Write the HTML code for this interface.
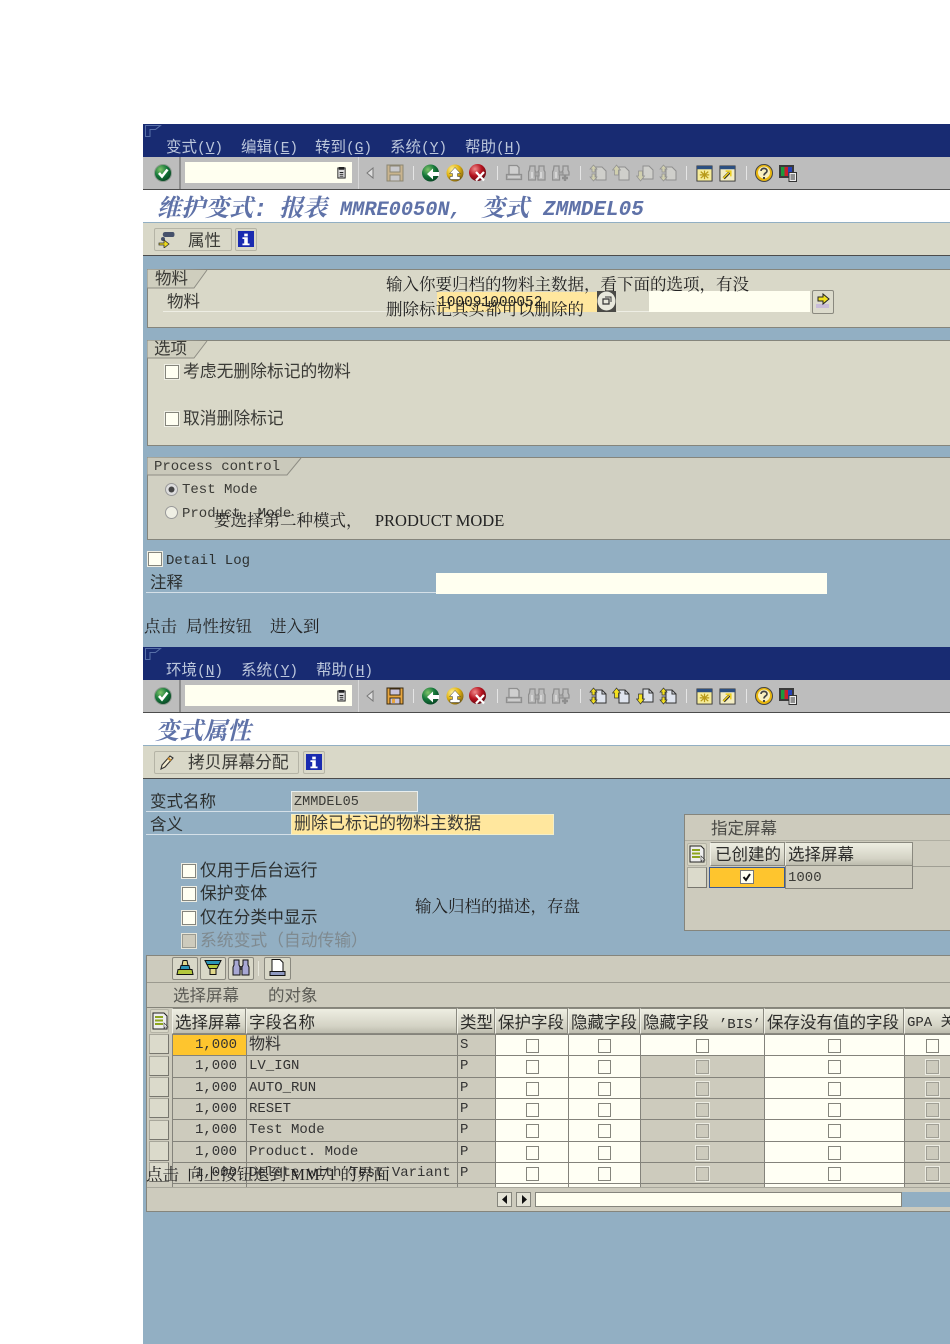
<!DOCTYPE html>
<html lang="zh"><head><meta charset="utf-8"><title>SAP</title>
<style>
html,body{margin:0;padding:0;background:#fff}
#p{position:relative;width:950px;height:1344px;overflow:hidden;background:#fff;font-family:"Liberation Mono","Noto Sans CJK SC",monospace;color:#333}
#p div,#p span.a,#p svg.a{position:absolute}
.t{position:absolute;white-space:nowrap;font-size:14px;line-height:18px;color:#3a3a36;transform:translateY(-8px)}
.z{font-family:"Liberation Mono","Noto Sans CJK SC",monospace;font-size:16.5px;transform:translateY(-7px)}
.s{font-family:"Liberation Serif","Noto Serif CJK SC",serif;font-size:16.5px;color:#222;line-height:20px;transform:translateY(-9px)}
.m{font-family:"Liberation Mono","Noto Sans CJK SC",monospace;font-size:15.5px;color:#bcc7dc;line-height:18px;transform:translateY(-8px)}
.m span{font-size:14.5px}
.ti{font-style:italic;font-weight:bold;color:#5f72a8;font-size:24px;line-height:30px;transform:translateY(-11px);font-family:"Liberation Mono","Noto Serif CJK SC",serif}
.cb{box-sizing:border-box;width:14px;height:14px;background:#fffff2;border:1px solid #85857c;box-shadow:0 0 0 1px #eeeee4}
.cb.d{background:#cdcbbd;border:1px solid #9a9a90;box-shadow:0 0 0 1px #e6e6da}
.hd{box-sizing:border-box;background:linear-gradient(#eeeee2,#d4d3c5 70%,#bdbcae);border:1px solid #8a897f;border-left-color:#f0f0e6;font-size:16.5px;color:#2c2c2a;line-height:29px;padding-left:2px;white-space:nowrap;overflow:hidden;height:26px;top:1008px}
.sel{box-sizing:border-box;left:149px;width:20px;height:20px;background:#dbdacb;border:1px solid #a7a69a;border-right-color:#77766e;border-bottom-color:#77766e}
.btn{box-sizing:border-box;background:#d9d8c8;border:1px solid #b5b4a6;border-radius:2px}
.hl{height:1px;background:#7f7e76}
.ul{height:1px;background:#d5e0e8}
table{border-collapse:collapse;table-layout:fixed;position:absolute;left:172px;top:1034px;width:790px}
td{height:20.33px;padding:0;border:1px solid #84837b;background:#cdcbbd;font-size:14px;line-height:20px;color:#333;white-space:nowrap;position:relative;overflow:hidden;vertical-align:top}
td.w{background:#fffff4}
td.n{text-align:right;padding-right:9px}
td.x{padding-left:2px}
td i{display:block;box-sizing:border-box;width:13px;height:14px;margin:4px auto 0;background:#fffff4;border:1px solid #85857c}
td.k i{background:#cdcbbd;border-color:#a09f95;box-shadow:0 0 0 1px #ecece2}
</style></head><body><div id="p">
<svg width="0" height="0" style="position:absolute"><defs>
<radialGradient id="gg" cx=".35" cy=".3" r=".8"><stop offset="0" stop-color="#7fc46a"/><stop offset=".5" stop-color="#14773a"/><stop offset="1" stop-color="#063c20"/></radialGradient>
<radialGradient id="gy" cx=".35" cy=".3" r=".8"><stop offset="0" stop-color="#fff3a0"/><stop offset=".5" stop-color="#e2b410"/><stop offset="1" stop-color="#6e5410"/></radialGradient>
<radialGradient id="gr" cx=".35" cy=".3" r=".8"><stop offset="0" stop-color="#f08a8a"/><stop offset=".5" stop-color="#b5121e"/><stop offset="1" stop-color="#560810"/></radialGradient>
<symbol id="ok" viewBox="0 0 18 18"><circle cx="9" cy="9" r="8.500" fill="url(#gg)" stroke="#8e9a90"/><path d="M5 9l3 3.500 5.500-7" fill="none" stroke="#fff" stroke-width="2.600"/></symbol>
<symbol id="back" viewBox="0 0 18 18"><circle cx="8.500" cy="9" r="8.500" fill="url(#gg)"/><path d="M5 10l6-5.500v3.500h6v4h-6v3.500z" fill="#fff"/></symbol>
<symbol id="up" viewBox="0 0 18 18"><circle cx="9" cy="9" r="8.500" fill="url(#gy)"/><path d="M9 3.500l5.500 6H11.500v3H14v3H4v-3h2.500v-3H3.500z" fill="#fff" stroke="#333" stroke-width=".5"/></symbol>
<symbol id="x" viewBox="0 0 18 18"><circle cx="8.500" cy="8.500" r="8.500" fill="url(#gr)"/><path d="M7 8l8 8.500M15 8l-8 8.500" stroke="#fff" stroke-width="2.300"/></symbol>
<symbol id="save" viewBox="0 0 18 18"><path d="M1 1h16v16H1z" fill="#e8a63e" stroke="#3b2b10"/><path d="M4 2h10v6H4zM4 11h10v6H4z" fill="#c9c3dc" stroke="#3b2b10"/><path d="M6 12h3v4H6z" fill="#e8a63e"/></symbol>
<symbol id="saved" viewBox="0 0 18 18"><path d="M1 1h16v16H1z" fill="#c9b48e" stroke="#8c8674"/><path d="M4 2h10v6H4zM4 11h10v6H4z" fill="#c8c8cc" stroke="#8c8674"/></symbol>
<symbol id="print" viewBox="0 0 18 18"><path d="M4 1.500h8l2 2v7H4z" fill="#cfcfcf" stroke="#8f8f8f" stroke-width="1.300"/><path d="M1.500 10.500h15v5h-15z" fill="#b4b4b4" stroke="#8f8f8f" stroke-width="1.300"/><path d="M3 13h12" stroke="#e4e4e4"/></symbol>
<symbol id="find" viewBox="0 0 18 18"><path d="M2 2h5v4l.5 2v8h-7V8L1.500 6zM11 2h5v4l1 2v8h-7V8l1-2z" fill="#bdbdbd" stroke="#8f8f8f" stroke-width="1.300"/><path d="M7 8h4v4H7z" fill="#a8a8a8" stroke="#8f8f8f"/><path d="M3 8h2v6H3zM12 8h2v6h-2z" fill="#d6d6d6"/></symbol>
<symbol id="findn" viewBox="0 0 18 18"><path d="M2 2h5v4l.5 2v8h-7V8L1.500 6zM11 2h5v4l1 2v3h-7V8l1-2z" fill="#bdbdbd" stroke="#8f8f8f" stroke-width="1.300"/><path d="M7 8h4v3H7z" fill="#a8a8a8" stroke="#8f8f8f"/><path d="M3 8h2v6H3z" fill="#d6d6d6"/><path d="M13 11v6M10 14h6" stroke="#8f8f8f" stroke-width="2.400"/></symbol>
<symbol id="p1" viewBox="0 0 18 18"><path d="M7 3h6l4 4v9H7z" fill="#dfe4ee" stroke="#333"/><path d="M13 3v4h4" fill="none" stroke="#333"/><path d="M4.500 1L8 5H6v3H3V5H1z" fill="#f4e11e" stroke="#333" stroke-width=".7"/><path d="M4.500 17L8 13H6v-3H3v3H1z" fill="#f4e11e" stroke="#333" stroke-width=".7"/></symbol>
<symbol id="p2" viewBox="0 0 18 18"><path d="M7 3h6l4 4v9H7z" fill="#dfe4ee" stroke="#333"/><path d="M13 3v4h4" fill="none" stroke="#333"/><path d="M4.500 1L8.500 6H6.500v5h-4V6H.500z" fill="#f4e11e" stroke="#333" stroke-width=".7"/></symbol>
<symbol id="p3" viewBox="0 0 18 18"><path d="M7 2h6l4 4v9H7z" fill="#dfe4ee" stroke="#333"/><path d="M13 2v4h4" fill="none" stroke="#333"/><path d="M4.500 17L8.500 12H6.500V7h-4v5H.500z" fill="#f4e11e" stroke="#333" stroke-width=".7"/></symbol>
<symbol id="d1" viewBox="0 0 18 18"><path d="M7 3h6l4 4v9H7z" fill="#cfcfcb" stroke="#8f8f8f"/><path d="M4.500 1L8 5H6v3H3V5H1z" fill="#d0cfae" stroke="#8f8f8f" stroke-width=".7"/><path d="M4.500 17L8 13H6v-3H3v3H1z" fill="#d0cfae" stroke="#8f8f8f" stroke-width=".7"/></symbol>
<symbol id="d2" viewBox="0 0 18 18"><path d="M7 3h6l4 4v9H7z" fill="#cfcfcb" stroke="#8f8f8f"/><path d="M4.500 1L8.500 6H6.500v5h-4V6H.500z" fill="#d0cfae" stroke="#8f8f8f" stroke-width=".7"/></symbol>
<symbol id="d3" viewBox="0 0 18 18"><path d="M7 2h6l4 4v9H7z" fill="#cfcfcb" stroke="#8f8f8f"/><path d="M4.500 17L8.500 12H6.500V7h-4v5H.500z" fill="#d0cfae" stroke="#8f8f8f" stroke-width=".7"/></symbol>
<symbol id="nw" viewBox="0 0 18 18"><path d="M1 1h16v16H1z" fill="#f6ec9a" stroke="#333"/><path d="M1 1h16v3.500H1z" fill="#2c4f80"/><path d="M9 6v9M5 7l8 7M13 7l-8 7M4 10.500h10" stroke="#b89a1a" stroke-width="1.300"/></symbol>
<symbol id="sc" viewBox="0 0 18 18"><path d="M1 1h16v16H1z" fill="#f3edc4" stroke="#333"/><path d="M1 1h16v3.500H1z" fill="#2c4f80"/><path d="M5 14l6-6" stroke="#222" stroke-width="3"/><path d="M4.500 14l6-6M7 6.500h5.500V12" fill="none" stroke="#eccd1a" stroke-width="1.600"/></symbol>
<symbol id="help" viewBox="0 0 18 18"><circle cx="9" cy="9" r="8.500" fill="#e8b60e" stroke="#444"/><circle cx="9" cy="8.500" r="6" fill="#f8efc0"/><path d="M6 7c0-3.500 6-3.500 6 0 0 2-3 2-3 4.500" fill="none" stroke="#444" stroke-width="1.700"/><path d="M8 13h2v2H8z" fill="#444"/></symbol>
<symbol id="cust" viewBox="0 0 18 18"><path d="M0 1h15v13H0z" fill="#3a3a3a"/><path d="M2 3h3.500v9H2z" fill="#1c9a3c"/><path d="M5.500 3H9v9H5.500z" fill="#c81e2c"/><path d="M9 3h4v9H9z" fill="#2440b8"/><path d="M10 8.500h7.500v9H10z" fill="#eee" stroke="#333"/><path d="M11.500 11h4.500M11.500 13h4.500M11.500 15h4.500" stroke="#333"/></symbol>
<symbol id="doc" viewBox="0 0 12 14"><path d="M2 2h8v11H2z" fill="#ddd" stroke="#222"/><path d="M3 1h6v3H3z" fill="#222"/><path d="M4 7h4M4 9h4M4 11h4" stroke="#222"/></symbol>
<symbol id="info" viewBox="0 0 18 18"><path d="M0 0h18v18H0z" fill="#1a2bb0"/><path d="M7 3h4v3H7zM5 7h6v7h2v2H5v-2h2V9H5z" fill="#fff"/></symbol>
<symbol id="ls" viewBox="0 0 18 18"><path d="M2 1h11l3 3v13H2z" fill="#eee" stroke="#222"/><path d="M4 4h8v2H4zM4 7.500h8v2H4zM4 11h8v2H4z" fill="#8da51f"/><path d="M13 11l4 4h-3l-1 2z" fill="#fff" stroke="#333" stroke-width=".6"/></symbol>
</defs></svg>

<div style="left:143px;top:124px;width:807px;height:1220px;background:#92afc3"></div>

<!-- Screen 1 header -->
<div style="left:143px;top:124px;width:807px;height:33px;background:#182b72"></div>
<svg class="a" style="left:145px;top:125px" width="17" height="13" fill="none" stroke="#5870a8"><path d="M.5.500h15l-5 4H5v7H.5z"/></svg>
<div class="t m" style="left:166px;top:147px">变式<span>(<u>V</u>)</span></div>
<div class="t m" style="left:241px;top:147px">编辑<span>(<u>E</u>)</span></div>
<div class="t m" style="left:315px;top:147px">转到<span>(<u>G</u>)</span></div>
<div class="t m" style="left:390px;top:147px">系统<span>(<u>Y</u>)</span></div>
<div class="t m" style="left:465px;top:147px">帮助<span>(<u>H</u>)</span></div>

<div style="left:143px;top:157px;width:807px;height:32px;background:#bdbdbd"></div>
<div style="left:143px;top:189px;width:807px;height:1px;background:#4c4c4c"></div>
<div style="left:179px;top:157px;width:2px;height:32px;background:#8d8d8d"></div>
<div style="left:358px;top:157px;width:1px;height:32px;background:#d8d8d8"></div>
<div style="left:185px;top:162px;width:167px;height:21px;background:#fffff0"></div>
<svg class="a" style="left:336px;top:166px" width="11" height="13"><use href="#doc"/></svg>
<svg class="a" style="left:154px;top:164px" width="18" height="18"><use href="#ok"/></svg>
<svg class="a" style="left:366px;top:167px" width="9" height="12"><path d="M7 1L1 6l6 5z" fill="#ddd" stroke="#777"/></svg>
<svg class="a" style="left:386px;top:164px" width="18" height="18"><use href="#saved"/></svg>
<div style="left:413px;top:166px;width:1px;height:14px;background:#e5e5e5"></div>
<svg class="a" style="left:422px;top:164px" width="18" height="18"><use href="#back"/></svg>
<svg class="a" style="left:446px;top:164px" width="18" height="18"><use href="#up"/></svg>
<svg class="a" style="left:469px;top:164px" width="18" height="18"><use href="#x"/></svg>
<div style="left:497px;top:166px;width:1px;height:14px;background:#e5e5e5"></div>
<svg class="a" style="left:505px;top:164px" width="18" height="18"><use href="#print"/></svg>
<svg class="a" style="left:528px;top:164px" width="18" height="18"><use href="#find"/></svg>
<svg class="a" style="left:552px;top:164px" width="18" height="18"><use href="#findn"/></svg>
<div style="left:580px;top:166px;width:1px;height:14px;background:#e5e5e5"></div>
<svg class="a" style="left:589px;top:164px" width="18" height="18"><use href="#d1"/></svg>
<svg class="a" style="left:612px;top:164px" width="18" height="18"><use href="#d2"/></svg>
<svg class="a" style="left:636px;top:164px" width="18" height="18"><use href="#d3"/></svg>
<svg class="a" style="left:659px;top:164px" width="18" height="18"><use href="#d1"/></svg>
<div style="left:686px;top:166px;width:1px;height:14px;background:#e5e5e5"></div>
<svg class="a" style="left:696px;top:165px" width="17" height="17"><use href="#nw"/></svg>
<svg class="a" style="left:719px;top:165px" width="17" height="17"><use href="#sc"/></svg>
<div style="left:746px;top:166px;width:1px;height:14px;background:#e5e5e5"></div>
<svg class="a" style="left:755px;top:164px" width="18" height="18"><use href="#help"/></svg>
<svg class="a" style="left:779px;top:164px" width="18" height="18"><use href="#cust"/></svg>

<div style="left:143px;top:190px;width:807px;height:32px;background:#fff"></div>
<div class="t ti" style="left:157px;top:207px">维护变式:</div>
<div class="t ti" style="left:279px;top:207px">报表</div>
<div class="t ti" style="left:340px;top:207px;font-size:20.3px">MMRE0050N,</div>
<div class="t ti" style="left:481px;top:207px">变式</div>
<div class="t ti" style="left:543px;top:207px;font-size:21px">ZMMDEL05</div>

<div style="left:143px;top:223px;width:807px;height:32px;background:#d9d8c8"></div>
<div style="left:143px;top:255px;width:807px;height:1px;background:#4c4c4c"></div>
<div class="btn" style="left:154px;top:228px;width:78px;height:23px"></div>
<svg class="a" style="left:158px;top:231px" width="18" height="17"><path d="M7 1h8c2 0 2 5 0 5H7C4 6 4 1 7 1z" fill="#45506a"/><circle cx="5" cy="8" r="2" fill="#45506a"/><path d="M1 12h5V9l5 4-5 4v-3H1z" fill="#eedc1a" stroke="#333" stroke-width=".8"/></svg>
<div class="t z" style="left:188px;top:240px">属性</div>
<div class="btn" style="left:235px;top:228px;width:22px;height:23px"></div>
<svg class="a" style="left:238px;top:231px" width="16" height="16"><use href="#info"/></svg>

<!-- Group 物料 -->
<div style="box-sizing:border-box;left:147px;top:269px;width:820px;height:59px;background:#d9d8c8;border:1px solid #85857c"></div>
<svg class="a" style="left:147px;top:269px" width="62" height="20"><path d="M0 .5V19h47L60 1" fill="#cfcebe" stroke="#8e8d84"/></svg>
<div class="t z" style="left:155px;top:278px">物料</div>
<div class="t z" style="left:167px;top:301px">物料</div>
<div class="ul" style="left:163px;top:311px;width:274px;background:#eeeee4"></div>
<div style="left:437px;top:292px;width:160px;height:20px;background:#ffe79e"></div>
<div style="left:617px;top:311px;width:32px;height:1px;background:#eeeee4"></div>
<div style="left:649px;top:291px;width:161px;height:21px;background:#fffff0"></div>
<div class="t s" style="left:386px;top:284px">输入你要归档的物料主数据，看下面的选项，有没</div>
<div class="t s" style="left:386px;top:309px">删除标记其实都可以删除的</div>
<div class="t" style="left:438px;top:302px;font-size:14.500px;color:#222">100091000052</div>
<svg class="a" style="left:597px;top:291px" width="24" height="22"><path d="M0 0h19v21H0z" fill="#4a4a46"/><ellipse cx="9.500" cy="10" rx="9" ry="9.500" fill="#e8e8dc"/><path d="M6 8h6v5H6z" fill="none" stroke="#333" stroke-width="1.200"/><path d="M8 6h6v5" fill="none" stroke="#333"/></svg>
<div class="btn" style="left:812px;top:290px;width:22px;height:24px;border-color:#8a897f;background:#dcdbcc"></div>
<svg class="a" style="left:815px;top:293px" width="16" height="16"><path d="M1 11h13v4H1z" fill="#c8bcd8"/><path d="M3 4h5V1l6 5-6 5V8H3z" fill="#f0e020" stroke="#222"/></svg>

<!-- Group 选项 -->
<div style="box-sizing:border-box;left:147px;top:340px;width:820px;height:106px;background:#d9d8c8;border:1px solid #85857c"></div>
<svg class="a" style="left:147px;top:340px" width="62" height="20"><path d="M0 .5V18h47L60 1" fill="#cfcebe" stroke="#8e8d84"/></svg>
<div class="t z" style="left:154px;top:348px">选项</div>
<div class="cb" style="left:165px;top:365px"></div>
<div class="t z" style="left:183px;top:372px;font-size:16.800px">考虑无删除标记的物料</div>
<div class="cb" style="left:165px;top:412px"></div>
<div class="t z" style="left:183px;top:419px;font-size:16.800px">取消删除标记</div>

<!-- Group Process -->
<div style="box-sizing:border-box;left:147px;top:457px;width:820px;height:83px;background:#d1d0c2;border:1px solid #85857c"></div>
<svg class="a" style="left:147px;top:457px" width="156" height="20"><path d="M0 .5V18h140L154 1" fill="#cac9bb" stroke="#8e8d84"/></svg>
<div class="t" style="left:154px;top:466px">Process control</div>
<svg class="a" style="left:164px;top:482px" width="15" height="15"><circle cx="7.500" cy="7.500" r="6" fill="#ddd" stroke="#999"/><circle cx="7.500" cy="7.500" r="3" fill="#444"/></svg>
<div class="t" style="left:182px;top:489px">Test Mode</div>
<svg class="a" style="left:164px;top:505px" width="15" height="15"><circle cx="7.500" cy="7.500" r="6" fill="#efefe4" stroke="#999"/></svg>
<div class="t" style="left:182px;top:513px">Product. Mode</div>
<div class="t s" style="left:214px;top:520px">要选择第二种模式， &nbsp; PRODUCT MODE</div>

<div class="cb" style="left:148px;top:552px"></div>
<div class="t" style="left:166px;top:560px;color:#2c3030">Detail Log</div>
<div class="t z" style="left:150px;top:582px;color:#2c3030">注释</div>
<div class="ul" style="left:146px;top:592px;width:290px"></div>
<div style="left:436px;top:573px;width:391px;height:21px;background:#fffff0"></div>
<div class="t s" style="left:144px;top:626px">点击</div>
<div class="t s" style="left:186px;top:626px">局性按钮</div>
<div class="t s" style="left:270px;top:626px">进入到</div>

<!-- Screen 2 header -->
<div style="left:143px;top:647px;width:807px;height:33px;background:#182b72"></div>
<svg class="a" style="left:145px;top:648px" width="17" height="13" fill="none" stroke="#5870a8"><path d="M.5.500h15l-5 4H5v7H.5z"/></svg>
<div class="t m" style="left:166px;top:670px">环境<span>(<u>N</u>)</span></div>
<div class="t m" style="left:241px;top:670px">系统<span>(<u>Y</u>)</span></div>
<div class="t m" style="left:316px;top:670px">帮助<span>(<u>H</u>)</span></div>

<div style="left:143px;top:680px;width:807px;height:32px;background:#bdbdbd"></div>
<div style="left:143px;top:712px;width:807px;height:1px;background:#4c4c4c"></div>
<div style="left:179px;top:680px;width:2px;height:32px;background:#8d8d8d"></div>
<div style="left:358px;top:680px;width:1px;height:32px;background:#d8d8d8"></div>
<div style="left:185px;top:685px;width:167px;height:21px;background:#fffff0"></div>
<svg class="a" style="left:336px;top:689px" width="11" height="13"><use href="#doc"/></svg>
<svg class="a" style="left:154px;top:687px" width="18" height="18"><use href="#ok"/></svg>
<svg class="a" style="left:366px;top:690px" width="9" height="12"><path d="M7 1L1 6l6 5z" fill="#ddd" stroke="#777"/></svg>
<svg class="a" style="left:386px;top:687px" width="18" height="18"><use href="#save"/></svg>
<div style="left:413px;top:689px;width:1px;height:14px;background:#e5e5e5"></div>
<svg class="a" style="left:422px;top:687px" width="18" height="18"><use href="#back"/></svg>
<svg class="a" style="left:446px;top:687px" width="18" height="18"><use href="#up"/></svg>
<svg class="a" style="left:469px;top:687px" width="18" height="18"><use href="#x"/></svg>
<div style="left:497px;top:689px;width:1px;height:14px;background:#e5e5e5"></div>
<svg class="a" style="left:505px;top:687px" width="18" height="18"><use href="#print"/></svg>
<svg class="a" style="left:528px;top:687px" width="18" height="18"><use href="#find"/></svg>
<svg class="a" style="left:552px;top:687px" width="18" height="18"><use href="#findn"/></svg>
<div style="left:580px;top:689px;width:1px;height:14px;background:#e5e5e5"></div>
<svg class="a" style="left:589px;top:687px" width="18" height="18"><use href="#p1"/></svg>
<svg class="a" style="left:612px;top:687px" width="18" height="18"><use href="#p2"/></svg>
<svg class="a" style="left:636px;top:687px" width="18" height="18"><use href="#p3"/></svg>
<svg class="a" style="left:659px;top:687px" width="18" height="18"><use href="#p1"/></svg>
<div style="left:686px;top:689px;width:1px;height:14px;background:#e5e5e5"></div>
<svg class="a" style="left:696px;top:688px" width="17" height="17"><use href="#nw"/></svg>
<svg class="a" style="left:719px;top:688px" width="17" height="17"><use href="#sc"/></svg>
<div style="left:746px;top:689px;width:1px;height:14px;background:#e5e5e5"></div>
<svg class="a" style="left:755px;top:687px" width="18" height="18"><use href="#help"/></svg>
<svg class="a" style="left:779px;top:687px" width="18" height="18"><use href="#cust"/></svg>

<div style="left:143px;top:713px;width:807px;height:32px;background:#fff"></div>
<div class="t ti" style="left:155px;top:730px">变式属性</div>
<div style="left:143px;top:746px;width:807px;height:32px;background:#d9d8c8"></div>
<div style="left:143px;top:778px;width:807px;height:1px;background:#4c4c4c"></div>
<div class="btn" style="left:154px;top:751px;width:145px;height:23px"></div>
<svg class="a" style="left:158px;top:754px" width="17" height="17"><path d="M3 15l1-4 8-9 3 2-8 9z" fill="#f3ecd0" stroke="#333" stroke-width="1.100"/><path d="M10 4l3 2.500" stroke="#c98a2a" stroke-width="2"/></svg>
<div class="t z" style="left:188px;top:763px;font-size:16.800px">拷贝屏幕分配</div>
<div class="btn" style="left:303px;top:751px;width:22px;height:23px"></div>
<svg class="a" style="left:306px;top:754px" width="16" height="16"><use href="#info"/></svg>

<!-- Fields -->
<div class="t z" style="left:150px;top:801px;color:#2c3030">变式名称</div>
<div style="box-sizing:border-box;left:291px;top:791px;width:127px;height:21px;background:#c8c6b8;border:1px solid #e8eeee"></div>
<div class="t" style="left:294px;top:802px;font-size:13.500px">ZMMDEL05</div>
<div class="ul" style="left:146px;top:811px;width:145px"></div>
<div class="t z" style="left:150px;top:824px;color:#2c3030">含义</div>
<div style="box-sizing:border-box;left:291px;top:814px;width:263px;height:21px;background:#ffe79e;border:1px solid #f2eeca"></div>
<div class="t z" style="left:294px;top:824px;font-size:17px">删除已标记的物料主数据</div>
<div class="ul" style="left:146px;top:834px;width:145px"></div>

<div class="cb" style="left:182px;top:864px"></div><div class="t z" style="left:200px;top:871px;color:#2c3030;font-size:16.800px">仅用于后台运行</div>
<div class="cb" style="left:182px;top:887px"></div><div class="t z" style="left:200px;top:894px;color:#2c3030;font-size:16.800px">保护变体</div>
<div class="cb" style="left:182px;top:911px"></div><div class="t z" style="left:200px;top:918px;color:#2c3030;font-size:16.800px">仅在分类中显示</div>
<div class="cb d" style="left:182px;top:934px"></div><div class="t z" style="left:200px;top:941px;color:#7f8a90;font-size:16.800px">系统变式（自动传输）</div>
<div class="t s" style="left:415px;top:906px">输入归档的描述，存盘</div>

<!-- Right panel -->
<div style="box-sizing:border-box;left:684px;top:814px;width:280px;height:117px;background:#cdcbbd;border:1px solid #85857c"></div>
<div class="t z" style="left:711px;top:828px;color:#4a4a46">指定屏幕</div>
<div class="hl" style="left:685px;top:840px;width:265px;background:#b0afa2"></div>
<div class="hl" style="left:912px;top:866px;width:38px;background:#a09f94"></div>
<div class="btn" style="left:687px;top:843px;width:20px;height:23px"></div>
<svg class="a" style="left:688px;top:845px" width="18" height="18"><use href="#ls"/></svg>
<div class="hd" style="left:710px;top:842px;width:75px;height:24px;line-height:25px;padding-left:4px">已创建的</div>
<div class="hd" style="left:785px;top:842px;width:128px;height:24px;line-height:25px">选择屏幕</div>
<div class="sel" style="left:687px;top:867px;width:20px;height:21px"></div>
<div style="box-sizing:border-box;left:709px;top:867px;width:76px;height:21px;background:#fec52e;border:1px solid #3c5a92"></div>
<div style="box-sizing:border-box;left:740px;top:870px;width:14px;height:14px;background:#fffff2;border:1px solid #777"></div>
<svg class="a" style="left:741px;top:871px" width="12" height="12"><path d="M2.500 6l2.500 3 4-6" fill="none" stroke="#111" stroke-width="2"/></svg>
<div style="box-sizing:border-box;left:785px;top:866px;width:128px;height:23px;border:1px solid #84837b;border-top:0"></div>
<div class="t" style="left:788px;top:877px">1000</div>

<!-- Lower panel -->
<div style="box-sizing:border-box;left:146px;top:955px;width:820px;height:257px;background:#cdcbbd;border:1px solid #85857c"></div>
<div class="hl" style="left:147px;top:982px;width:803px;background:#9b9a8f"></div>
<div class="hl" style="left:147px;top:1007px;width:803px;background:#85847a"></div>
<div class="btn" style="left:172px;top:957px;width:26px;height:23px;border-color:#8a897f"></div>
<div class="btn" style="left:200px;top:957px;width:26px;height:23px;border-color:#8a897f"></div>
<div class="btn" style="left:228px;top:957px;width:26px;height:23px;border-color:#8a897f"></div>
<div class="btn" style="left:264px;top:957px;width:27px;height:23px;border-color:#8a897f"></div>
<div style="left:258px;top:961px;width:1px;height:15px;background:#e8e8dc"></div>
<svg class="a" style="left:176px;top:959px" width="18" height="17"><path d="M1 15.500l1-5h14l1 5z" fill="#b4c83c" stroke="#111"/><path d="M4 10.500l1-4h8l1 4z" fill="#2a94b8" stroke="#111"/><path d="M6 6.500l1-5h4l1 5z" fill="#e2d98c" stroke="#111"/></svg>
<svg class="a" style="left:204px;top:959px" width="18" height="17"><path d="M1 1.500h16l-2 4H3z" fill="#2a94b8" stroke="#111"/><path d="M3 5.500h12l-2 4H5z" fill="#b4c83c" stroke="#111"/><path d="M6 9.500h6v6H6z" fill="#e2d98c" stroke="#111"/></svg>
<svg class="a" style="left:232px;top:959px" width="18" height="17"><path d="M2 1h5v5l1 2v8H1V8l1-2zM11 1h5v5l1 2v8h-7V8l1-2z" fill="#a8a8d4" stroke="#111"/><path d="M8 7h2v4H8z" fill="#333"/></svg>
<svg class="a" style="left:269px;top:959px" width="17" height="18"><path d="M3 .5h8l3 3v9H3z" fill="#fff" stroke="#111"/><path d="M1 12.500h15v4H1z" fill="#8f9ac0" stroke="#111"/></svg>
<div class="t z" style="left:173px;top:995px;color:#5c5c56">选择屏幕</div>
<div class="t z" style="left:268px;top:995px;color:#5c5c56">的对象</div>

<!-- Table -->
<div class="btn" style="left:150px;top:1009px;width:19px;height:24px"></div>
<svg class="a" style="left:151px;top:1012px" width="18" height="18"><use href="#ls"/></svg>
<div class="hd" style="left:172px;width:74px">选择屏幕</div>
<div class="hd" style="left:246px;width:211px">字段名称</div>
<div class="hd" style="left:457px;width:38px">类型</div>
<div class="hd" style="left:495px;width:73px">保护字段</div>
<div class="hd" style="left:568px;width:72px">隐藏字段</div>
<div class="hd" style="left:640px;width:124px">隐藏字段 <span style="font-size:14px">’BIS’</span></div>
<div class="hd" style="left:764px;width:140px">保存没有值的字段</div>
<div class="hd" style="left:904px;width:60px;font-size:14px">GPA 关</div>

<div class="sel" style="top:1034px"></div><div class="sel" style="top:1056px"></div><div class="sel" style="top:1077px"></div><div class="sel" style="top:1098px"></div><div class="sel" style="top:1120px"></div><div class="sel" style="top:1141px"></div><div class="sel" style="top:1162px"></div>

<div style="left:0;top:0;width:950px;height:1187px;overflow:hidden">
<table>
<colgroup><col style="width:74px"><col style="width:211px"><col style="width:38px"><col style="width:73px"><col style="width:72px"><col style="width:124px"><col style="width:140px"><col style="width:58px"></colgroup>
<tr><td class="n" style="background:#fec52e">1,000</td><td class="x" style="font-size:16px">物料</td><td class="x">S</td><td class="w"><i></i></td><td class="w"><i></i></td><td class="w"><i></i></td><td class="w"><i></i></td><td class="w"><i style="margin-left:21px"></i></td></tr>
<tr><td class="n">1,000</td><td class="x">LV_IGN</td><td class="x">P</td><td class="w"><i></i></td><td class="w"><i></i></td><td class="k"><i></i></td><td class="w"><i></i></td><td class="k"><i style="margin-left:21px"></i></td></tr>
<tr><td class="n">1,000</td><td class="x">AUTO_RUN</td><td class="x">P</td><td class="w"><i></i></td><td class="w"><i></i></td><td class="k"><i></i></td><td class="w"><i></i></td><td class="k"><i style="margin-left:21px"></i></td></tr>
<tr><td class="n">1,000</td><td class="x">RESET</td><td class="x">P</td><td class="w"><i></i></td><td class="w"><i></i></td><td class="k"><i></i></td><td class="w"><i></i></td><td class="k"><i style="margin-left:21px"></i></td></tr>
<tr><td class="n">1,000</td><td class="x">Test Mode</td><td class="x">P</td><td class="w"><i></i></td><td class="w"><i></i></td><td class="k"><i></i></td><td class="w"><i></i></td><td class="k"><i style="margin-left:21px"></i></td></tr>
<tr><td class="n">1,000</td><td class="x">Product. Mode</td><td class="x">P</td><td class="w"><i></i></td><td class="w"><i></i></td><td class="k"><i></i></td><td class="w"><i></i></td><td class="k"><i style="margin-left:21px"></i></td></tr>
<tr><td class="n">1,000</td><td class="x">Delete with Test Variant</td><td class="x">P</td><td class="w"><i></i></td><td class="w"><i></i></td><td class="k"><i></i></td><td class="w"><i></i></td><td class="k"><i style="margin-left:21px"></i></td></tr>
<tr><td></td><td></td><td></td><td class="w"></td><td class="w"></td><td class="k"></td><td class="w"></td><td class="k"></td></tr>
</table>
</div>
<div class="t s" style="left:146px;top:1174px">点击 &nbsp;向上按钮退到 MM71 的界面</div>

<!-- Scrollbar -->
<div class="hl" style="left:147px;top:1187px;width:803px;background:#a8a79c"></div>
<div style="box-sizing:border-box;left:497px;top:1192px;width:15px;height:15px;background:#e4e3d6;border:1px solid #85857c"></div>
<svg class="a" style="left:501px;top:1195px" width="7" height="9"><path d="M6 0L1 4.500 6 9z" fill="#111"/></svg>
<div style="box-sizing:border-box;left:516px;top:1192px;width:15px;height:15px;background:#e4e3d6;border:1px solid #85857c"></div>
<svg class="a" style="left:521px;top:1195px" width="7" height="9"><path d="M1 0l5 4.500L1 9z" fill="#111"/></svg>
<div style="box-sizing:border-box;left:535px;top:1192px;width:367px;height:15px;background:#fffff0;border:1px solid #85857c"></div>
<div style="left:902px;top:1192px;width:48px;height:15px;background:#92afc3"></div>
</div></body></html>
